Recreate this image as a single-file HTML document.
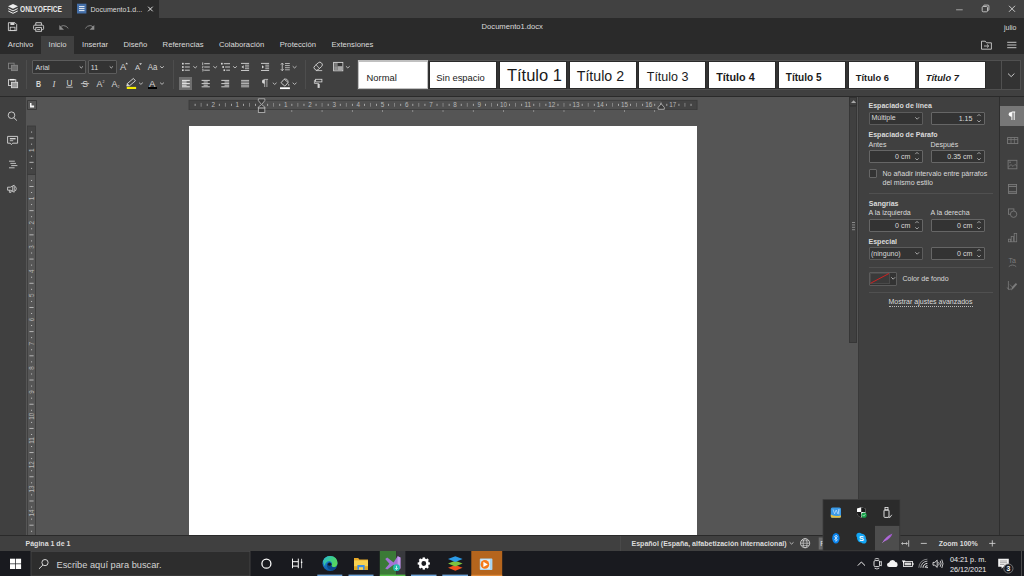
<!DOCTYPE html>
<html>
<head>
<meta charset="utf-8">
<title>ONLYOFFICE</title>
<style>
*{box-sizing:border-box;margin:0;padding:0}
html,body{width:1024px;height:576px;overflow:hidden;background:#555;font-family:"Liberation Sans",sans-serif;font-size:7.04px;color:#d9d9d9}
.a{position:absolute}
.t{position:absolute;white-space:nowrap;line-height:1}
svg{position:absolute;overflow:visible}
/* title bar */
#titlebar{left:0;top:0;width:1024px;height:18px;background:#414141}
#doctab{left:72px;top:0;width:87px;height:18px;background:#2a2a2a}
#header{left:0;top:18px;width:1024px;height:36px;background:#2a2a2a}
#tabactive{left:41px;top:36px;width:33px;height:18px;background:#404040}
.tab{font-size:7.68px;top:40.6px;color:#dcdcdc}
#toolbar{left:0;top:54px;width:1024px;height:43px;background:#404040;border-bottom:1px solid #2a2a2a}
.sep{position:absolute;top:60px;width:1px;height:29px;background:#4d4d4d}
.combo{position:absolute;background:#333;border:1px solid #5c5c5c;border-radius:1px}
/* gallery */
#gallery{left:357px;top:60px;width:664px;height:29.5px;background:#333;border:1px solid #505050}
.sty{position:absolute;top:61.3px;width:68px;height:27.6px;background:#fff;color:#1a1a1a;border:0.8px solid #2a2a2a}
.sty span{position:absolute;left:7px;white-space:nowrap;line-height:1}
/* doc area */
#leftbar{left:0;top:97px;width:26px;height:438px;background:#404040}
#sheet{left:189px;top:126px;width:508.3px;height:409px;background:#fff}
#rightpanel{left:858px;top:97px;width:141px;height:438px;background:#404040;border-left:1px solid #393939}
#rightbar{left:999px;top:97px;width:25px;height:438px;background:#404040;border-left:1px solid #2e2e2e}
#statusbar{left:0;top:535px;width:1024px;height:16px;background:#404040;border-top:1px solid #2a2a2a}
#taskbar{left:0;top:551px;width:1024px;height:25px;background:#191a1f}
.rp{font-size:7.04px;color:#dadada}
.rpb{font-size:7.04px;color:#dadada;font-weight:bold}
.spin{position:absolute;width:54px;height:13px;background:#333;border:1px solid #666;border-radius:1px}
.spin span{position:absolute;right:11.2px;top:2.4px;line-height:1;white-space:nowrap;color:#dadada}
.hr{position:absolute;left:868.5px;width:124px;height:1px;background:#505050}
</style>
</head>
<body>
<!-- TITLE BAR -->
<div class="a" id="titlebar"></div>
<div class="a" id="doctab"></div>
<div class="a" id="header"></div>
<div class="a" id="tabactive"></div>

<div class="t" style="left:20.4px;top:5.5px;font-size:8.2px;font-weight:bold;color:#e8e8e8;transform-origin:0 0;transform:scaleX(0.808)">ONLYOFFICE</div>
<div class="t" style="left:90.5px;top:5.6px;font-size:7.04px;color:#dcdcdc">Documento1.d...</div>
<div class="t" style="left:481.6px;top:23.3px;font-size:7.62px;color:#dcdcdc">Documento1.docx</div>
<div class="t" style="left:1004px;top:23.6px;font-size:7px;color:#dcdcdc">julio</div>

<div class="t tab" style="left:7.8px">Archivo</div>
<div class="t tab" style="left:48.5px">Inicio</div>
<div class="t tab" style="left:82px">Insertar</div>
<div class="t tab" style="left:123.5px">Diseño</div>
<div class="t tab" style="left:162.6px">Referencias</div>
<div class="t tab" style="left:219px">Colaboración</div>
<div class="t tab" style="left:279.7px">Protección</div>
<div class="t tab" style="left:331.5px">Extensiones</div>

<!-- TOOLBAR -->
<div class="a" id="toolbar"></div>
<div class="sep" style="left:25.6px"></div>
<div class="sep" style="left:172.6px"></div>
<div class="sep" style="left:305px"></div>
<div class="combo" style="left:32px;top:60px;width:54.4px;height:14.4px"></div>
<div class="combo" style="left:88px;top:60px;width:29px;height:14.4px"></div>
<div class="t" style="left:35.6px;top:63.6px;font-size:7.04px;color:#dcdcdc">Arial</div>
<div class="t" style="left:90.8px;top:63.6px;font-size:7.04px;color:#dcdcdc">11</div>

<!-- GALLERY -->
<div class="a" id="gallery"></div>
<div class="a" style="left:358px;top:60.3px;width:70px;height:28.9px;background:#c0c0c0"></div><div class="a" style="left:359.4px;top:61.7px;width:67.2px;height:26.1px;background:#fff"></div>
<div class="t" style="left:366.54px;top:73.44px;font-size:9.4px;font-weight:normal;font-style:normal;color:#1a1a1a">Normal</div>
<div class="sty" style="left:429.0px;width:68px;"></div>
<div class="t" style="left:436.32px;top:73.44px;font-size:9.4px;font-weight:normal;font-style:normal;color:#1a1a1a">Sin espacio</div>
<div class="sty" style="left:498.8px;width:68px;"></div>
<div class="t" style="left:506.93px;top:67.43px;font-size:16.5px;font-weight:normal;font-style:normal;color:#1a1a1a">Título 1</div>
<div class="sty" style="left:568.6px;width:68px;"></div>
<div class="t" style="left:576.72px;top:69.38px;font-size:14.2px;font-weight:normal;font-style:normal;color:#1a1a1a">Título 2</div>
<div class="sty" style="left:638.4px;width:68px;"></div>
<div class="t" style="left:646.75px;top:70.82px;font-size:12.5px;font-weight:normal;font-style:normal;color:#1a1a1a">Título 3</div>
<div class="sty" style="left:708.2px;width:68px;"></div>
<div class="t" style="left:716.28px;top:72.26px;font-size:10.8px;font-weight:bold;font-style:normal;color:#1a1a1a">Título 4</div>
<div class="sty" style="left:778.0px;width:68px;"></div>
<div class="t" style="left:785.80px;top:72.89px;font-size:10.05px;font-weight:bold;font-style:normal;color:#1a1a1a">Título 5</div>
<div class="sty" style="left:847.8px;width:68px;"></div>
<div class="t" style="left:855.81px;top:73.53px;font-size:9.3px;font-weight:bold;font-style:normal;color:#1a1a1a">Título 6</div>
<div class="sty" style="left:917.6px;width:68px;"></div>
<div class="t" style="left:925.81px;top:73.53px;font-size:9.3px;font-weight:bold;font-style:italic;color:#1a1a1a">Título 7</div>
<div class="a" style="left:1001.2px;top:60.5px;width:1px;height:28.6px;background:#505050"></div>

<!--ICONS_START-->
<svg style="left:0;top:0" width="1024" height="100" viewBox="0 0 1024 100">
<path d="M13 3.9 L18 6.3 L13 8.7 L8 6.3 Z" fill="#efefef"/>
<path d="M8.3 8.6 L13 10.9 L17.7 8.6 M8.3 11 L13 13.3 L17.7 11" fill="none" stroke="#efefef" stroke-width="1"/>
<rect x="77" y="3.7" width="9.4" height="9.8" fill="#446fa8"/>
<path d="M79 6.6 L84.5 6.6" stroke="#fff" stroke-width="0.9" fill="none"/>
<path d="M79 8.6 L84.5 8.6" stroke="#fff" stroke-width="0.9" fill="none"/>
<path d="M79 10.6 L84.5 10.6" stroke="#fff" stroke-width="0.9" fill="none"/>
<path d="M148.1 6.7 L152.7 11.3 M152.7 6.7 L148.1 11.3" stroke="#e0e0e0" stroke-width="1"/>
<path d="M956.1 9.8 L962.7 9.8" stroke="#b0b0b0" stroke-width="0.9" fill="none"/>
<rect x="982.2" y="6.5" width="5.3" height="5.3" rx="1" fill="none" stroke="#d0d0d0" stroke-width="0.85"/>
<path d="M983.6 6.5 V6 Q983.6 5.1 984.5 5.1 H988 Q988.9 5.1 988.9 6 V9.5 Q988.9 10.4 988 10.4 H987.5" fill="none" stroke="#d0d0d0" stroke-width="0.85"/>
<path d="M1009 5.8 L1015 11.8 M1015 5.8 L1009 11.8" stroke="#d8d8d8" stroke-width="0.9"/>
<path d="M8.4 22.7 H14.9 L16.7 24.5 V30.6 H8.4 Z" fill="none" stroke="#d6d6d6" stroke-width="0.9" stroke-linejoin="round"/>
<rect x="10.4" y="22.7" width="4" height="2.3" fill="#d6d6d6"/>
<rect x="10.2" y="27.2" width="4.8" height="3.4" fill="none" stroke="#d6d6d6" stroke-width="0.8"/>
<path d="M35.8 25 V22.7 H41.4 V25" fill="none" stroke="#d6d6d6" stroke-width="0.9"/>
<path d="M35.6 29.6 H34.6 Q33.6 29.6 33.6 28.6 V26.2 Q33.6 25.2 34.6 25.2 H42.6 Q43.6 25.2 43.6 26.2 V28.6 Q43.6 29.6 42.6 29.6 H41.6" fill="none" stroke="#d6d6d6" stroke-width="0.9"/>
<rect x="35.8" y="27.6" width="5.6" height="3.7" fill="none" stroke="#d6d6d6" stroke-width="0.9"/>
<path d="M37.2 29.5 L40 29.5" stroke="#d6d6d6" stroke-width="0.8" fill="none"/>
<path d="M68.3 28.4 Q66.3 25.5 63.4 25.6 Q61.4 25.7 60.2 27.4" fill="none" stroke="#8c8c8c" stroke-width="0.9"/>
<path d="M59.3 25 V29.8 H64 Z" fill="#8c8c8c"/>
<path d="M85.3 28.4 Q87.3 25.5 90.2 25.6 Q92.2 25.7 93.4 27.4" fill="none" stroke="#8c8c8c" stroke-width="0.9"/>
<path d="M94.3 25 V29.8 H89.6 Z" fill="#8c8c8c"/>
<path d="M981.5 49.2 V41.2 H985.3 L986.5 42.8 H991.4 V49.2 Z" fill="none" stroke="#d6d6d6" stroke-width="0.85" stroke-linejoin="round"/>
<path d="M984 46 H988.6 M987 44.4 L988.7 46 L987 47.6" fill="none" stroke="#d6d6d6" stroke-width="0.8"/>
<path d="M1007.2 42.3 L1016.4 42.3" stroke="#d6d6d6" stroke-width="0.9" fill="none"/>
<path d="M1007.2 45 L1016.4 45" stroke="#d6d6d6" stroke-width="0.9" fill="none"/>
<path d="M1007.2 47.7 L1016.4 47.7" stroke="#d6d6d6" stroke-width="0.9" fill="none"/>
<rect x="8.5" y="63.2" width="5.6" height="5.5" fill="none" stroke="#808080" stroke-width="0.9"/>
<rect x="11.5" y="65.3" width="5.9" height="5.3" fill="#6e6e6e" stroke="#858585" stroke-width="0.9"/>
<rect x="8.5" y="79.7" width="7.3" height="5.8" fill="none" stroke="#d6d6d6" stroke-width="0.9"/>
<path d="M10 79.7 L14.6 79.7" stroke="#efefef" stroke-width="1.5" fill="none"/>
<rect x="11.5" y="82.3" width="6.1" height="5.4" fill="#9a9a9a" stroke="#d6d6d6" stroke-width="0.9"/>
<path d="M79.70 66.45 L81.30 67.95 L82.90 66.45" fill="none" stroke="#c4c4c4" stroke-width="0.9"/>
<path d="M109.70 66.45 L111.30 67.95 L112.90 66.45" fill="none" stroke="#c4c4c4" stroke-width="0.9"/>
<text x="36.1" y="86.6" font-size="8.7" fill="#d6d6d6" font-weight="bold" font-style="normal" font-family="Liberation Sans" text-anchor="start" textLength="5.1" lengthAdjust="spacingAndGlyphs">B</text>
<text x="54" y="86.6" font-size="8.8" fill="#d6d6d6" font-weight="normal" font-style="italic" font-family="Liberation Serif" text-anchor="middle" >I</text>
<text x="69.5" y="85.8" font-size="8.2" fill="#d6d6d6" font-weight="normal" font-style="normal" font-family="Liberation Sans" text-anchor="middle" >U</text>
<path d="M66.2 87.2 L72.8 87.2" stroke="#d6d6d6" stroke-width="0.8" fill="none"/>
<text x="85" y="86.6" font-size="8.6" fill="#d6d6d6" font-weight="normal" font-style="normal" font-family="Liberation Sans" text-anchor="middle" >S</text>
<path d="M80.8 83.6 L89.2 83.6" stroke="#d6d6d6" stroke-width="0.8" fill="none"/>
<text x="96.6" y="86.8" font-size="8.8" fill="#d6d6d6" font-weight="normal" font-style="normal" font-family="Liberation Sans" text-anchor="start" >A</text>
<text x="102.6" y="82.6" font-size="3.6" fill="#d6d6d6" font-weight="normal" font-style="normal" font-family="Liberation Sans" text-anchor="start" >2</text>
<text x="111.6" y="86.8" font-size="8.8" fill="#d6d6d6" font-weight="normal" font-style="normal" font-family="Liberation Sans" text-anchor="start" >A</text>
<text x="117.6" y="87.6" font-size="3.6" fill="#d6d6d6" font-weight="normal" font-style="normal" font-family="Liberation Sans" text-anchor="start" >2</text>
<text x="119.9" y="70" font-size="9.3" fill="#d6d6d6" font-weight="normal" font-style="normal" font-family="Liberation Sans" text-anchor="start" >A</text>
<path d="M125.3 64.3 L126.65 62.6 L128 64.3 Z" fill="#d6d6d6"/>
<text x="134.9" y="70" font-size="7.6" fill="#d6d6d6" font-weight="normal" font-style="normal" font-family="Liberation Sans" text-anchor="start" >A</text>
<path d="M139.1 63.3 H142 L140.55 65 Z" fill="#d6d6d6"/>
<text x="147.8" y="70" font-size="8.6" fill="#d6d6d6" font-weight="normal" font-style="normal" font-family="Liberation Sans" text-anchor="start" textLength="9.6" lengthAdjust="spacingAndGlyphs">Aa</text>
<path d="M160.10 66.25 L162.00 67.95 L163.90 66.25" fill="none" stroke="#c4c4c4" stroke-width="0.9"/>
<g transform="translate(131.6,82) rotate(-40)"><rect x="-4.3" y="-1.55" width="8" height="3.1" fill="none" stroke="#d6d6d6" stroke-width="0.85"/><path d="M-4.3 -1.55 L-6.4 0 L-4.3 1.55" fill="#d6d6d6" stroke="#d6d6d6" stroke-width="0.6"/></g>
<rect x="126.8" y="86.9" width="9.3" height="2.1" fill="#f7ee00"/>
<path d="M139.00 82.65 L140.90 84.35 L142.80 82.65" fill="none" stroke="#c4c4c4" stroke-width="0.9"/>
<text x="148.9" y="86.7" font-size="9.6" fill="#d6d6d6" font-weight="normal" font-style="normal" font-family="Liberation Sans" text-anchor="start" >A</text>
<rect x="148" y="87" width="9" height="2" fill="#000"/>
<path d="M160.10 82.65 L162.00 84.35 L163.90 82.65" fill="none" stroke="#c4c4c4" stroke-width="0.9"/>
<rect x="182" y="62.85" width="1.7" height="1.7" fill="#d6d6d6"/>
<path d="M184.8 63.7 L189.8 63.7" stroke="#d6d6d6" stroke-width="0.9" fill="none"/>
<rect x="182" y="66.15" width="1.7" height="1.7" fill="#d6d6d6"/>
<path d="M184.8 67 L189.8 67" stroke="#d6d6d6" stroke-width="0.9" fill="none"/>
<rect x="182" y="69.35000000000001" width="1.7" height="1.7" fill="#d6d6d6"/>
<path d="M184.8 70.2 L189.8 70.2" stroke="#d6d6d6" stroke-width="0.9" fill="none"/>
<path d="M193.30 66.25 L195.20 67.95 L197.10 66.25" fill="none" stroke="#c4c4c4" stroke-width="0.9"/>
<path d="M204.2 63.7 L209.8 63.7" stroke="#d6d6d6" stroke-width="0.9" fill="none"/>
<path d="M204.2 67 L209.8 67" stroke="#d6d6d6" stroke-width="0.9" fill="none"/>
<path d="M204.2 70.2 L209.8 70.2" stroke="#d6d6d6" stroke-width="0.9" fill="none"/>
<path d="M202.7 62.4 L202.7 65" stroke="#d6d6d6" stroke-width="0.8" fill="none"/>
<path d="M202.2 66.2 L203.3 66.2" stroke="#d6d6d6" stroke-width="0.7" fill="none"/>
<path d="M202.2 67.8 L203.3 67.8" stroke="#d6d6d6" stroke-width="0.7" fill="none"/>
<path d="M203.2 66.2 L202.3 67.8" stroke="#d6d6d6" stroke-width="0.6" fill="none"/>
<path d="M202.2 69.4 L203.3 69.4" stroke="#d6d6d6" stroke-width="0.7" fill="none"/>
<path d="M202.2 71 L203.3 71" stroke="#d6d6d6" stroke-width="0.7" fill="none"/>
<path d="M203.2 69.4 L203.2 71" stroke="#d6d6d6" stroke-width="0.6" fill="none"/>
<path d="M213.30 66.25 L215.20 67.95 L217.10 66.25" fill="none" stroke="#c4c4c4" stroke-width="0.9"/>
<rect x="221" y="62.85" width="1.7" height="1.7" fill="#d6d6d6"/>
<path d="M223.8 63.7 L230 63.7" stroke="#d6d6d6" stroke-width="0.9" fill="none"/>
<rect x="222.3" y="66.15" width="1.7" height="1.7" fill="#d6d6d6"/>
<path d="M225.1 67 L230 67" stroke="#d6d6d6" stroke-width="0.9" fill="none"/>
<rect x="223.5" y="69.35" width="1.6" height="1.7" fill="#d6d6d6"/>
<path d="M226.2 70.2 L230 70.2" stroke="#d6d6d6" stroke-width="0.9" fill="none"/>
<path d="M233.10 66.25 L235.00 67.95 L236.90 66.25" fill="none" stroke="#c4c4c4" stroke-width="0.9"/>
<path d="M241 63.4 L249.1 63.4" stroke="#d6d6d6" stroke-width="0.9" fill="none"/>
<path d="M241 70.5 L249.1 70.5" stroke="#d6d6d6" stroke-width="0.9" fill="none"/>
<path d="M245 65.2 L249.1 65.2" stroke="#bdbdbd" stroke-width="0.9" fill="none"/>
<path d="M245 66.95 L249.1 66.95" stroke="#bdbdbd" stroke-width="0.9" fill="none"/>
<path d="M245 68.7 L249.1 68.7" stroke="#bdbdbd" stroke-width="0.9" fill="none"/>
<path d="M243.6 65.3 V68.6 L241.5 66.95 Z" fill="#d6d6d6"/>
<path d="M261 63.4 L269.1 63.4" stroke="#d6d6d6" stroke-width="0.9" fill="none"/>
<path d="M261 70.5 L269.1 70.5" stroke="#d6d6d6" stroke-width="0.9" fill="none"/>
<path d="M265.3 65.2 L269.1 65.2" stroke="#bdbdbd" stroke-width="0.9" fill="none"/>
<path d="M265.3 66.95 L269.1 66.95" stroke="#bdbdbd" stroke-width="0.9" fill="none"/>
<path d="M265.3 68.7 L269.1 68.7" stroke="#bdbdbd" stroke-width="0.9" fill="none"/>
<path d="M262 65.3 V68.6 L264.1 66.95 Z" fill="#d6d6d6"/>
<path d="M282.25 63.6 L282.25 70.3" stroke="#d6d6d6" stroke-width="0.8" fill="none"/>
<path d="M280.9 64.6 L282.25 63 L283.6 64.6 M280.9 69.2 L282.25 70.8 L283.6 69.2" fill="none" stroke="#d6d6d6" stroke-width="0.8"/>
<path d="M285 63.5 L289.8 63.5" stroke="#d6d6d6" stroke-width="0.75" fill="none"/>
<path d="M285 65.6 L289.8 65.6" stroke="#d6d6d6" stroke-width="0.75" fill="none"/>
<path d="M285 67.7 L289.8 67.7" stroke="#d6d6d6" stroke-width="0.75" fill="none"/>
<path d="M285 69.8 L289.8 69.8" stroke="#d6d6d6" stroke-width="0.75" fill="none"/>
<path d="M292.70 66.25 L294.60 67.95 L296.50 66.25" fill="none" stroke="#c4c4c4" stroke-width="0.9"/>
<rect x="179" y="77" width="13" height="13" fill="#6f6f6f"/>
<path d="M182 80.4 L189.8 80.4" stroke="#f0f0f0" stroke-width="0.95" fill="none"/>
<path d="M182 82 L186.6 82" stroke="#f0f0f0" stroke-width="0.95" fill="none"/>
<path d="M182 83.6 L189.8 83.6" stroke="#f0f0f0" stroke-width="0.95" fill="none"/>
<path d="M182 85.2 L186.6 85.2" stroke="#f0f0f0" stroke-width="0.95" fill="none"/>
<path d="M182 86.8 L189.8 86.8" stroke="#f0f0f0" stroke-width="0.95" fill="none"/>
<path d="M201.6 80.4 L209.8 80.4" stroke="#d6d6d6" stroke-width="0.95" fill="none"/>
<path d="M203.6 82 L207.8 82" stroke="#d6d6d6" stroke-width="0.95" fill="none"/>
<path d="M201.6 83.6 L209.8 83.6" stroke="#d6d6d6" stroke-width="0.95" fill="none"/>
<path d="M203.6 85.2 L207.8 85.2" stroke="#d6d6d6" stroke-width="0.95" fill="none"/>
<path d="M201.6 86.8 L209.8 86.8" stroke="#d6d6d6" stroke-width="0.95" fill="none"/>
<path d="M221.3 80.4 L229.2 80.4" stroke="#d6d6d6" stroke-width="0.95" fill="none"/>
<path d="M224.5 82 L229.2 82" stroke="#d6d6d6" stroke-width="0.95" fill="none"/>
<path d="M221.3 83.6 L229.2 83.6" stroke="#d6d6d6" stroke-width="0.95" fill="none"/>
<path d="M224.5 85.2 L229.2 85.2" stroke="#d6d6d6" stroke-width="0.95" fill="none"/>
<path d="M221.3 86.8 L229.2 86.8" stroke="#d6d6d6" stroke-width="0.95" fill="none"/>
<path d="M241.1 80.4 L249.1 80.4" stroke="#c4c4c4" stroke-width="0.95" fill="none"/>
<path d="M241.1 82 L249.1 82" stroke="#c4c4c4" stroke-width="0.95" fill="none"/>
<path d="M241.1 83.6 L249.1 83.6" stroke="#c4c4c4" stroke-width="0.95" fill="none"/>
<path d="M241.1 85.2 L249.1 85.2" stroke="#c4c4c4" stroke-width="0.95" fill="none"/>
<path d="M241.1 86.8 L249.1 86.8" stroke="#c4c4c4" stroke-width="0.95" fill="none"/>
<path d="M264.6 79.4 H268.1 M264.7 79.3 V87 M266.9 79.3 V87" stroke="#d6d6d6" stroke-width="0.7" fill="none"/>
<path d="M265 79.3 Q262 79.3 262 81.5 Q262 83.7 264.7 83.7 V79.3 Z" fill="#d6d6d6"/>
<path d="M272.80 82.75 L274.70 84.45 L276.60 82.75" fill="none" stroke="#c4c4c4" stroke-width="0.9"/>
<g transform="translate(284.6,82.6) rotate(40)"><rect x="-2.6" y="-2.4" width="5.2" height="4.9" rx="0.5" fill="none" stroke="#d6d6d6" stroke-width="0.85"/><path d="M-2.6 -2.4 Q0 -5.5 2.6 -2.4" fill="none" stroke="#d6d6d6" stroke-width="0.7"/></g>
<path d="M288.8 83.6 Q289.9 85.2 288.8 85.9 Q287.7 85.2 288.8 83.6 Z" fill="#d6d6d6"/>
<rect x="280" y="87.3" width="9.9" height="1.8" fill="#fff"/>
<path d="M292.70 82.75 L294.60 84.45 L296.50 82.75" fill="none" stroke="#c4c4c4" stroke-width="0.9"/>
<g transform="translate(318.2,66.2) rotate(-42)"><rect x="-4.6" y="-2.5" width="9.2" height="5" rx="2.3" fill="none" stroke="#d6d6d6" stroke-width="0.85"/><path d="M-0.6 -2.5 V2.5" stroke="#d6d6d6" stroke-width="0.7"/></g>
<path d="M316 70.6 L322.2 70.6" stroke="#d6d6d6" stroke-width="0.8" fill="none"/>
<rect x="333.6" y="62.4" width="9.2" height="8.4" fill="none" stroke="#d6d6d6" stroke-width="0.9"/>
<rect x="334.2" y="63" width="3.6" height="3.2" fill="#7a7a7a"/>
<rect x="337.8" y="63" width="4.4" height="3.2" fill="#333"/>
<rect x="334.2" y="66.2" width="3.6" height="4" fill="#8e8e8e"/>
<rect x="337.8" y="66.2" width="4.4" height="4" fill="#a6a6a6"/>
<path d="M345.90 66.25 L347.80 67.95 L349.70 66.25" fill="none" stroke="#c4c4c4" stroke-width="0.9"/>
<rect x="315.6" y="79.3" width="6.3" height="2.6" fill="none" stroke="#d6d6d6" stroke-width="0.85"/>
<path d="M315.6 80.4 H314.4 V83.4 H318.6 V84" fill="none" stroke="#d6d6d6" stroke-width="0.8"/>
<rect x="317.6" y="84" width="2.1" height="3.9" fill="#d6d6d6"/>
<path d="M1008.00 73.55 L1011.20 76.65 L1014.40 73.55" fill="none" stroke="#d0d0d0" stroke-width="0.95"/>
</svg>
<!--ICONS_END-->
<!-- DOC AREA -->
<div class="a" id="leftbar"></div>
<div class="a" id="sheet"></div>
<!-- RULERS -->
<div class="a" style="left:27.2px;top:100.3px;width:9.5px;height:9.6px;background:#565656;border:0.9px solid #3a3a3a;border-radius:0.8px"></div>
<svg style="left:30px;top:103.2px" width="5" height="5" viewBox="0 0 5 5"><path d="M0 0 H1.5 V2.5 H4.1 V4.5 H0 Z" fill="#f4f4f4"/></svg>
<!--RULER_START-->
<svg style="left:0;top:0" width="1024" height="130" viewBox="0 0 1024 130">
<rect x="189.0" y="100.3" width="508.1" height="9.3" fill="#444" stroke="#3a3a3a" stroke-width="0.8"/>
<rect x="261.58" y="100.7" width="399.64" height="8.5" fill="#505050"/>
<rect x="194.70" y="103.8" width="0.8" height="2.1" fill="#bdbdbd"/>
<rect x="200.75" y="102.9" width="0.7" height="3.8" fill="#9a9a9a"/>
<rect x="206.79" y="103.8" width="0.8" height="2.1" fill="#bdbdbd"/>
<rect x="218.89" y="103.8" width="0.8" height="2.1" fill="#bdbdbd"/>
<rect x="224.94" y="102.9" width="0.7" height="3.8" fill="#9a9a9a"/>
<rect x="230.99" y="103.8" width="0.8" height="2.1" fill="#bdbdbd"/>
<rect x="243.08" y="103.8" width="0.8" height="2.1" fill="#bdbdbd"/>
<rect x="249.13" y="102.9" width="0.7" height="3.8" fill="#9a9a9a"/>
<rect x="255.18" y="103.8" width="0.8" height="2.1" fill="#bdbdbd"/>
<rect x="267.27" y="103.8" width="0.8" height="2.1" fill="#bdbdbd"/>
<rect x="273.32" y="102.9" width="0.7" height="3.8" fill="#9a9a9a"/>
<rect x="279.37" y="103.8" width="0.8" height="2.1" fill="#bdbdbd"/>
<rect x="291.47" y="103.8" width="0.8" height="2.1" fill="#bdbdbd"/>
<rect x="297.51" y="102.9" width="0.7" height="3.8" fill="#9a9a9a"/>
<rect x="303.56" y="103.8" width="0.8" height="2.1" fill="#bdbdbd"/>
<rect x="315.66" y="103.8" width="0.8" height="2.1" fill="#bdbdbd"/>
<rect x="321.71" y="102.9" width="0.7" height="3.8" fill="#9a9a9a"/>
<rect x="327.75" y="103.8" width="0.8" height="2.1" fill="#bdbdbd"/>
<rect x="339.85" y="103.8" width="0.8" height="2.1" fill="#bdbdbd"/>
<rect x="345.90" y="102.9" width="0.7" height="3.8" fill="#9a9a9a"/>
<rect x="351.95" y="103.8" width="0.8" height="2.1" fill="#bdbdbd"/>
<rect x="364.04" y="103.8" width="0.8" height="2.1" fill="#bdbdbd"/>
<rect x="370.09" y="102.9" width="0.7" height="3.8" fill="#9a9a9a"/>
<rect x="376.14" y="103.8" width="0.8" height="2.1" fill="#bdbdbd"/>
<rect x="388.23" y="103.8" width="0.8" height="2.1" fill="#bdbdbd"/>
<rect x="394.28" y="102.9" width="0.7" height="3.8" fill="#9a9a9a"/>
<rect x="400.33" y="103.8" width="0.8" height="2.1" fill="#bdbdbd"/>
<rect x="412.43" y="103.8" width="0.8" height="2.1" fill="#bdbdbd"/>
<rect x="418.47" y="102.9" width="0.7" height="3.8" fill="#9a9a9a"/>
<rect x="424.52" y="103.8" width="0.8" height="2.1" fill="#bdbdbd"/>
<rect x="436.62" y="103.8" width="0.8" height="2.1" fill="#bdbdbd"/>
<rect x="442.67" y="102.9" width="0.7" height="3.8" fill="#9a9a9a"/>
<rect x="448.71" y="103.8" width="0.8" height="2.1" fill="#bdbdbd"/>
<rect x="460.81" y="103.8" width="0.8" height="2.1" fill="#bdbdbd"/>
<rect x="466.86" y="102.9" width="0.7" height="3.8" fill="#9a9a9a"/>
<rect x="472.91" y="103.8" width="0.8" height="2.1" fill="#bdbdbd"/>
<rect x="485.00" y="103.8" width="0.8" height="2.1" fill="#bdbdbd"/>
<rect x="491.05" y="102.9" width="0.7" height="3.8" fill="#9a9a9a"/>
<rect x="497.10" y="103.8" width="0.8" height="2.1" fill="#bdbdbd"/>
<rect x="509.19" y="103.8" width="0.8" height="2.1" fill="#bdbdbd"/>
<rect x="515.24" y="102.9" width="0.7" height="3.8" fill="#9a9a9a"/>
<rect x="521.29" y="103.8" width="0.8" height="2.1" fill="#bdbdbd"/>
<rect x="533.39" y="103.8" width="0.8" height="2.1" fill="#bdbdbd"/>
<rect x="539.43" y="102.9" width="0.7" height="3.8" fill="#9a9a9a"/>
<rect x="545.48" y="103.8" width="0.8" height="2.1" fill="#bdbdbd"/>
<rect x="557.58" y="103.8" width="0.8" height="2.1" fill="#bdbdbd"/>
<rect x="563.63" y="102.9" width="0.7" height="3.8" fill="#9a9a9a"/>
<rect x="569.67" y="103.8" width="0.8" height="2.1" fill="#bdbdbd"/>
<rect x="581.77" y="103.8" width="0.8" height="2.1" fill="#bdbdbd"/>
<rect x="587.82" y="102.9" width="0.7" height="3.8" fill="#9a9a9a"/>
<rect x="593.87" y="103.8" width="0.8" height="2.1" fill="#bdbdbd"/>
<rect x="605.96" y="103.8" width="0.8" height="2.1" fill="#bdbdbd"/>
<rect x="612.01" y="102.9" width="0.7" height="3.8" fill="#9a9a9a"/>
<rect x="618.06" y="103.8" width="0.8" height="2.1" fill="#bdbdbd"/>
<rect x="630.15" y="103.8" width="0.8" height="2.1" fill="#bdbdbd"/>
<rect x="636.20" y="102.9" width="0.7" height="3.8" fill="#9a9a9a"/>
<rect x="642.25" y="103.8" width="0.8" height="2.1" fill="#bdbdbd"/>
<rect x="654.35" y="103.8" width="0.8" height="2.1" fill="#bdbdbd"/>
<rect x="660.39" y="102.9" width="0.7" height="3.8" fill="#9a9a9a"/>
<rect x="666.44" y="103.8" width="0.8" height="2.1" fill="#bdbdbd"/>
<rect x="678.54" y="103.8" width="0.8" height="2.1" fill="#bdbdbd"/>
<rect x="684.59" y="102.9" width="0.7" height="3.8" fill="#9a9a9a"/>
<rect x="690.63" y="103.8" width="0.8" height="2.1" fill="#bdbdbd"/>
<text x="213.19" y="107.0" font-size="6.3" fill="#b8b8b8" text-anchor="middle" font-family="Liberation Sans">2</text>
<text x="237.38" y="107.0" font-size="6.3" fill="#b8b8b8" text-anchor="middle" font-family="Liberation Sans">1</text>
<text x="285.77" y="107.0" font-size="6.3" fill="#b8b8b8" text-anchor="middle" font-family="Liberation Sans">1</text>
<text x="309.96" y="107.0" font-size="6.3" fill="#b8b8b8" text-anchor="middle" font-family="Liberation Sans">2</text>
<text x="334.15" y="107.0" font-size="6.3" fill="#b8b8b8" text-anchor="middle" font-family="Liberation Sans">3</text>
<text x="358.34" y="107.0" font-size="6.3" fill="#b8b8b8" text-anchor="middle" font-family="Liberation Sans">4</text>
<text x="382.54" y="107.0" font-size="6.3" fill="#b8b8b8" text-anchor="middle" font-family="Liberation Sans">5</text>
<text x="406.73" y="107.0" font-size="6.3" fill="#b8b8b8" text-anchor="middle" font-family="Liberation Sans">6</text>
<text x="430.92" y="107.0" font-size="6.3" fill="#b8b8b8" text-anchor="middle" font-family="Liberation Sans">7</text>
<text x="455.11" y="107.0" font-size="6.3" fill="#b8b8b8" text-anchor="middle" font-family="Liberation Sans">8</text>
<text x="479.30" y="107.0" font-size="6.3" fill="#b8b8b8" text-anchor="middle" font-family="Liberation Sans">9</text>
<text x="503.50" y="107.0" font-size="6.3" fill="#b8b8b8" text-anchor="middle" font-family="Liberation Sans">10</text>
<text x="527.69" y="107.0" font-size="6.3" fill="#b8b8b8" text-anchor="middle" font-family="Liberation Sans">11</text>
<text x="551.88" y="107.0" font-size="6.3" fill="#b8b8b8" text-anchor="middle" font-family="Liberation Sans">12</text>
<text x="576.07" y="107.0" font-size="6.3" fill="#b8b8b8" text-anchor="middle" font-family="Liberation Sans">13</text>
<text x="600.26" y="107.0" font-size="6.3" fill="#b8b8b8" text-anchor="middle" font-family="Liberation Sans">14</text>
<text x="624.46" y="107.0" font-size="6.3" fill="#b8b8b8" text-anchor="middle" font-family="Liberation Sans">15</text>
<text x="648.65" y="107.0" font-size="6.3" fill="#b8b8b8" text-anchor="middle" font-family="Liberation Sans">16</text>
<text x="672.84" y="107.0" font-size="6.3" fill="#b8b8b8" text-anchor="middle" font-family="Liberation Sans">17</text>
<rect x="291.47" y="110.2" width="0.7" height="1.6" fill="#b6b6b6"/>
<rect x="321.71" y="110.2" width="0.7" height="1.6" fill="#b6b6b6"/>
<rect x="351.95" y="110.2" width="0.7" height="1.6" fill="#b6b6b6"/>
<rect x="382.19" y="110.2" width="0.7" height="1.6" fill="#b6b6b6"/>
<rect x="412.43" y="110.2" width="0.7" height="1.6" fill="#b6b6b6"/>
<rect x="442.67" y="110.2" width="0.7" height="1.6" fill="#b6b6b6"/>
<rect x="472.91" y="110.2" width="0.7" height="1.6" fill="#b6b6b6"/>
<rect x="503.15" y="110.2" width="0.7" height="1.6" fill="#b6b6b6"/>
<rect x="533.39" y="110.2" width="0.7" height="1.6" fill="#b6b6b6"/>
<rect x="563.63" y="110.2" width="0.7" height="1.6" fill="#b6b6b6"/>
<rect x="593.87" y="110.2" width="0.7" height="1.6" fill="#b6b6b6"/>
<rect x="624.11" y="110.2" width="0.7" height="1.6" fill="#b6b6b6"/>
<rect x="654.35" y="110.2" width="0.7" height="1.6" fill="#b6b6b6"/>
<path d="M258.33 98.8 H264.83 V100.6 L261.58 104.6 L258.33 100.6 Z" fill="#3a3a3a" stroke="#b8b8b8" stroke-width="0.85"/>
<path d="M261.58 104.6 L264.83 107 V108.1 H258.33 V107 Z" fill="#3a3a3a" stroke="#b8b8b8" stroke-width="0.85"/>
<rect x="258.33" y="108.1" width="6.5" height="4.4" fill="#3a3a3a" stroke="#b8b8b8" stroke-width="0.85"/>
<path d="M661.21 102.6 V103.8 L664.31 107.3 V109.3 H658.11 V107.3 L661.21 103.8" fill="#3a3a3a" stroke="#b8b8b8" stroke-width="0.85"/>
</svg>
<svg style="left:0;top:0" width="40" height="535" viewBox="0 0 40 535">
<rect x="27.4" y="126.0" width="8.1" height="420" fill="#444" stroke="#3a3a3a" stroke-width="0.8"/>
<rect x="27.8" y="174.38" width="7.3" height="400" fill="#565656"/>
<rect x="27.4" y="173.98" width="8.1" height="0.8" fill="#363636"/>
<rect x="31" y="131.60" width="1.1" height="0.9" fill="#c8c8c8"/>
<rect x="29.4" y="137.65" width="4.2" height="0.9" fill="#c0c0c0"/>
<rect x="31" y="143.69" width="1.1" height="0.9" fill="#c8c8c8"/>
<text transform="translate(33.7,150.19) rotate(-90)" font-size="6.3" fill="#b8b8b8" text-anchor="middle" font-family="Liberation Sans">1</text>
<rect x="31" y="155.79" width="1.1" height="0.9" fill="#c8c8c8"/>
<rect x="29.4" y="161.84" width="4.2" height="0.9" fill="#c0c0c0"/>
<rect x="31" y="167.89" width="1.1" height="0.9" fill="#c8c8c8"/>
<rect x="31" y="179.98" width="1.1" height="0.9" fill="#c8c8c8"/>
<rect x="29.4" y="186.03" width="4.2" height="0.9" fill="#c0c0c0"/>
<rect x="31" y="192.08" width="1.1" height="0.9" fill="#c8c8c8"/>
<text transform="translate(33.7,198.58) rotate(-90)" font-size="6.3" fill="#b8b8b8" text-anchor="middle" font-family="Liberation Sans">1</text>
<rect x="31" y="204.17" width="1.1" height="0.9" fill="#c8c8c8"/>
<rect x="29.4" y="210.22" width="4.2" height="0.9" fill="#c0c0c0"/>
<rect x="31" y="216.27" width="1.1" height="0.9" fill="#c8c8c8"/>
<text transform="translate(33.7,222.77) rotate(-90)" font-size="6.3" fill="#b8b8b8" text-anchor="middle" font-family="Liberation Sans">2</text>
<rect x="31" y="228.37" width="1.1" height="0.9" fill="#c8c8c8"/>
<rect x="29.4" y="234.41" width="4.2" height="0.9" fill="#c0c0c0"/>
<rect x="31" y="240.46" width="1.1" height="0.9" fill="#c8c8c8"/>
<text transform="translate(33.7,246.96) rotate(-90)" font-size="6.3" fill="#b8b8b8" text-anchor="middle" font-family="Liberation Sans">3</text>
<rect x="31" y="252.56" width="1.1" height="0.9" fill="#c8c8c8"/>
<rect x="29.4" y="258.61" width="4.2" height="0.9" fill="#c0c0c0"/>
<rect x="31" y="264.65" width="1.1" height="0.9" fill="#c8c8c8"/>
<text transform="translate(33.7,271.15) rotate(-90)" font-size="6.3" fill="#b8b8b8" text-anchor="middle" font-family="Liberation Sans">4</text>
<rect x="31" y="276.75" width="1.1" height="0.9" fill="#c8c8c8"/>
<rect x="29.4" y="282.80" width="4.2" height="0.9" fill="#c0c0c0"/>
<rect x="31" y="288.85" width="1.1" height="0.9" fill="#c8c8c8"/>
<text transform="translate(33.7,295.34) rotate(-90)" font-size="6.3" fill="#b8b8b8" text-anchor="middle" font-family="Liberation Sans">5</text>
<rect x="31" y="300.94" width="1.1" height="0.9" fill="#c8c8c8"/>
<rect x="29.4" y="306.99" width="4.2" height="0.9" fill="#c0c0c0"/>
<rect x="31" y="313.04" width="1.1" height="0.9" fill="#c8c8c8"/>
<text transform="translate(33.7,319.54) rotate(-90)" font-size="6.3" fill="#b8b8b8" text-anchor="middle" font-family="Liberation Sans">6</text>
<rect x="31" y="325.13" width="1.1" height="0.9" fill="#c8c8c8"/>
<rect x="29.4" y="331.18" width="4.2" height="0.9" fill="#c0c0c0"/>
<rect x="31" y="337.23" width="1.1" height="0.9" fill="#c8c8c8"/>
<text transform="translate(33.7,343.73) rotate(-90)" font-size="6.3" fill="#b8b8b8" text-anchor="middle" font-family="Liberation Sans">7</text>
<rect x="31" y="349.33" width="1.1" height="0.9" fill="#c8c8c8"/>
<rect x="29.4" y="355.37" width="4.2" height="0.9" fill="#c0c0c0"/>
<rect x="31" y="361.42" width="1.1" height="0.9" fill="#c8c8c8"/>
<text transform="translate(33.7,367.92) rotate(-90)" font-size="6.3" fill="#b8b8b8" text-anchor="middle" font-family="Liberation Sans">8</text>
<rect x="31" y="373.52" width="1.1" height="0.9" fill="#c8c8c8"/>
<rect x="29.4" y="379.57" width="4.2" height="0.9" fill="#c0c0c0"/>
<rect x="31" y="385.61" width="1.1" height="0.9" fill="#c8c8c8"/>
<text transform="translate(33.7,392.11) rotate(-90)" font-size="6.3" fill="#b8b8b8" text-anchor="middle" font-family="Liberation Sans">9</text>
<rect x="31" y="397.71" width="1.1" height="0.9" fill="#c8c8c8"/>
<rect x="29.4" y="403.76" width="4.2" height="0.9" fill="#c0c0c0"/>
<rect x="31" y="409.81" width="1.1" height="0.9" fill="#c8c8c8"/>
<text transform="translate(33.7,416.30) rotate(-90)" font-size="6.3" fill="#b8b8b8" text-anchor="middle" font-family="Liberation Sans">10</text>
<rect x="31" y="421.90" width="1.1" height="0.9" fill="#c8c8c8"/>
<rect x="29.4" y="427.95" width="4.2" height="0.9" fill="#c0c0c0"/>
<rect x="31" y="434.00" width="1.1" height="0.9" fill="#c8c8c8"/>
<text transform="translate(33.7,440.50) rotate(-90)" font-size="6.3" fill="#b8b8b8" text-anchor="middle" font-family="Liberation Sans">11</text>
<rect x="31" y="446.09" width="1.1" height="0.9" fill="#c8c8c8"/>
<rect x="29.4" y="452.14" width="4.2" height="0.9" fill="#c0c0c0"/>
<rect x="31" y="458.19" width="1.1" height="0.9" fill="#c8c8c8"/>
<text transform="translate(33.7,464.69) rotate(-90)" font-size="6.3" fill="#b8b8b8" text-anchor="middle" font-family="Liberation Sans">12</text>
<rect x="31" y="470.29" width="1.1" height="0.9" fill="#c8c8c8"/>
<rect x="29.4" y="476.33" width="4.2" height="0.9" fill="#c0c0c0"/>
<rect x="31" y="482.38" width="1.1" height="0.9" fill="#c8c8c8"/>
<text transform="translate(33.7,488.88) rotate(-90)" font-size="6.3" fill="#b8b8b8" text-anchor="middle" font-family="Liberation Sans">13</text>
<rect x="31" y="494.48" width="1.1" height="0.9" fill="#c8c8c8"/>
<rect x="29.4" y="500.53" width="4.2" height="0.9" fill="#c0c0c0"/>
<rect x="31" y="506.57" width="1.1" height="0.9" fill="#c8c8c8"/>
<text transform="translate(33.7,513.07) rotate(-90)" font-size="6.3" fill="#b8b8b8" text-anchor="middle" font-family="Liberation Sans">14</text>
<rect x="31" y="518.67" width="1.1" height="0.9" fill="#c8c8c8"/>
<rect x="29.4" y="524.72" width="4.2" height="0.9" fill="#c0c0c0"/>
<rect x="31" y="530.77" width="1.1" height="0.9" fill="#c8c8c8"/>
</svg>
<!--RULER_END-->
<div class="a" id="rightpanel"></div>
<div class="a" id="rightbar"></div>

<!-- RIGHT PANEL CONTENT -->
<div class="a" style="left:849.4px;top:97px;width:9px;height:438px;background:#555"></div>
<div class="a" style="left:849.4px;top:97px;width:7.6px;height:9px;background:#404040;border:0.7px solid #333"></div>
<svg style="left:850.9px;top:100px" width="5.2" height="2.9" viewBox="0 0 5.2 2.9"><path d="M0 2.9 L2.6 0.2 L5.2 2.9 Z" fill="#a8a8a8"/></svg>
<div class="a" style="left:849.4px;top:106px;width:7.6px;height:237px;background:#404040;border:0.7px solid #363636"></div>
<div class="a" style="left:851.6px;top:221.5px;width:3.4px;height:0.9px;background:#8a8a8a;box-shadow:0 2.4px 0 #8a8a8a,0 4.8px 0 #8a8a8a,0 7.2px 0 #8a8a8a"></div>
<div class="t rpb" style="left:868.5px;top:102.2px">Espaciado de línea</div>
<div class="combo" style="left:868.5px;top:111.5px;width:54px;height:13px"></div>
<div class="t rp" style="left:871.5px;top:114.3px">Múltiple</div>
<svg style="left:915.3px;top:116.8px" width="4.4" height="2.6" viewBox="0 0 4.4 2.6"><path d="M0.3 0.3 L2.2 2.2 L4.1 0.3" fill="none" stroke="#c8c8c8" stroke-width="0.8"/></svg>
<div class="spin" style="left:930.5px;top:111.5px"><span>1.15</span></div>
<svg style="left:977.0px;top:113.9px" width="4" height="8.4" viewBox="0 0 4 8.4"><path d="M0.3 2.1 L2 0.4 L3.7 2.1 M0.3 6.3 L2 8 L3.7 6.3" fill="none" stroke="#c8c8c8" stroke-width="0.75"/></svg>
<div class="t rpb" style="left:868.5px;top:131px">Espaciado de Párafo</div>
<div class="t rp" style="left:868.5px;top:140.5px">Antes</div>
<div class="t rp" style="left:930.5px;top:140.5px">Después</div>
<div class="spin" style="left:868.5px;top:150px"><span>0 cm</span></div>
<svg style="left:915.0px;top:152.4px" width="4" height="8.4" viewBox="0 0 4 8.4"><path d="M0.3 2.1 L2 0.4 L3.7 2.1 M0.3 6.3 L2 8 L3.7 6.3" fill="none" stroke="#c8c8c8" stroke-width="0.75"/></svg>
<div class="spin" style="left:930.5px;top:150px"><span>0.35 cm</span></div>
<svg style="left:977.0px;top:152.4px" width="4" height="8.4" viewBox="0 0 4 8.4"><path d="M0.3 2.1 L2 0.4 L3.7 2.1 M0.3 6.3 L2 8 L3.7 6.3" fill="none" stroke="#c8c8c8" stroke-width="0.75"/></svg>
<div class="a" style="left:868.5px;top:169px;width:8.8px;height:8.8px;background:#333;border:0.8px solid #666;border-radius:1px"></div>
<div class="t rp" style="left:882.5px;top:169.5px">No añadir intervalo entre párrafos</div>
<div class="t rp" style="left:882.5px;top:179.3px">del mismo estilo</div>
<div class="hr" style="top:193px"></div>
<div class="t rpb" style="left:868.8px;top:199.8px">Sangrías</div>
<div class="t rp" style="left:868.5px;top:209.3px">A la izquierda</div>
<div class="t rp" style="left:930.5px;top:209.3px">A la derecha</div>
<div class="spin" style="left:868.5px;top:218.5px"><span>0 cm</span></div>
<svg style="left:915.0px;top:220.9px" width="4" height="8.4" viewBox="0 0 4 8.4"><path d="M0.3 2.1 L2 0.4 L3.7 2.1 M0.3 6.3 L2 8 L3.7 6.3" fill="none" stroke="#c8c8c8" stroke-width="0.75"/></svg>
<div class="spin" style="left:930.5px;top:218.5px"><span>0 cm</span></div>
<svg style="left:977.0px;top:220.9px" width="4" height="8.4" viewBox="0 0 4 8.4"><path d="M0.3 2.1 L2 0.4 L3.7 2.1 M0.3 6.3 L2 8 L3.7 6.3" fill="none" stroke="#c8c8c8" stroke-width="0.75"/></svg>
<div class="t rpb" style="left:868.5px;top:238px">Especial</div>
<div class="combo" style="left:868.5px;top:247px;width:54px;height:13px"></div>
<div class="t rp" style="left:871px;top:249.8px">(ninguno)</div>
<svg style="left:915.3px;top:252.4px" width="4.4" height="2.6" viewBox="0 0 4.4 2.6"><path d="M0.3 0.3 L2.2 2.2 L4.1 0.3" fill="none" stroke="#c8c8c8" stroke-width="0.8"/></svg>
<div class="spin" style="left:930.5px;top:247px"><span>0 cm</span></div>
<svg style="left:977.0px;top:249.4px" width="4" height="8.4" viewBox="0 0 4 8.4"><path d="M0.3 2.1 L2 0.4 L3.7 2.1 M0.3 6.3 L2 8 L3.7 6.3" fill="none" stroke="#c8c8c8" stroke-width="0.75"/></svg>
<div class="hr" style="top:266.5px"></div>
<div class="combo" style="left:868.5px;top:271.7px;width:28.5px;height:14px"></div>
<div class="a" style="left:870px;top:273.3px;width:19.5px;height:10.8px;background:#3a3a3a;border:0.5px solid #4a4a4a"></div>
<svg style="left:870px;top:273.3px" width="19.5" height="10.8" viewBox="0 0 19.5 10.8"><path d="M0.5 10.3 L19 0.5" stroke="#e01e1e" stroke-width="0.9"/></svg>
<svg style="left:890.5px;top:277.40000000000003px" width="4.4" height="2.6" viewBox="0 0 4.4 2.6"><path d="M0.3 0.3 L2.2 2.2 L4.1 0.3" fill="none" stroke="#c8c8c8" stroke-width="0.8"/></svg>
<div class="t rp" style="left:902.5px;top:274.8px">Color de fondo</div>
<div class="hr" style="top:291.5px"></div>
<div class="t rp" style="left:888.5px;top:297.7px;border-bottom:0.8px dotted #bbb;padding-bottom:1.2px">Mostrar ajustes avanzados</div>
<div class="a" style="left:1000px;top:106px;width:24px;height:19.5px;background:#777"></div>
<!-- STATUS BAR -->
<div class="a" id="statusbar"></div>
<div class="t" style="left:25.5px;top:539.8px;font-size:7.04px;font-weight:bold;color:#dcdcdc">Página 1 de 1</div>
<div class="t" style="left:631.5px;top:539.8px;font-size:7.04px;font-weight:bold;color:#dcdcdc">Español (España, alfabetización internacional)</div>
<div class="t" style="left:938.7px;top:539.8px;font-size:7.04px;font-weight:bold;color:#dcdcdc">Zoom 100%</div>

<!-- TASKBAR -->
<div class="a" id="taskbar"></div>

<!--ICONS2_START-->
<svg style="left:0;top:0" width="1024" height="576" viewBox="0 0 1024 576">
<circle cx="11.5" cy="115.2" r="3.3" fill="none" stroke="#d6d6d6" stroke-width="0.9"/>
<path d="M13.9 117.7 L16.9 120.6" stroke="#d6d6d6" stroke-width="0.95" fill="none"/>
<path d="M7.6 136.4 H17.6 V143.2 H12.6 L11.4 144.6 L10.2 143.2 H7.6 Z" fill="none" stroke="#d6d6d6" stroke-width="0.9" stroke-linejoin="round"/>
<path d="M9.8 138.7 L15.6 138.7" stroke="#d6d6d6" stroke-width="1.3" fill="none"/>
<path d="M9.8 140.7 L13.2 140.7" stroke="#d6d6d6" stroke-width="0.8" fill="none"/>
<path d="M9 161.2 L14.8 161.2" stroke="#d6d6d6" stroke-width="0.85" fill="none"/>
<path d="M10.4 163.4 L16 163.4" stroke="#d6d6d6" stroke-width="0.85" fill="none"/>
<path d="M11.2 165.6 L17.4 165.6" stroke="#d6d6d6" stroke-width="0.85" fill="none"/>
<path d="M9 167.8 L14.6 167.8" stroke="#d6d6d6" stroke-width="0.85" fill="none"/>
<path d="M7.6 187.2 H10.4 L14.2 185.2 V192.2 L10.4 190.2 H7.6 Z" fill="none" stroke="#d6d6d6" stroke-width="0.85" stroke-linejoin="round"/>
<path d="M9.4 190.2 V192.4 H11 V190.4" fill="none" stroke="#d6d6d6" stroke-width="0.8"/>
<path d="M15.4 186.4 Q17.2 188.7 15.4 191" fill="none" stroke="#d6d6d6" stroke-width="0.85"/>
<path d="M12.6 186.2 L12.6 191.2" stroke="#d6d6d6" stroke-width="0.7" fill="none"/>
<path d="M1011.8 112 H1015.2 M1011.9 111.9 V120 M1014.2 111.9 V120" stroke="#fff" stroke-width="0.95" fill="none"/>
<path d="M1011.9 111.9 Q1008.7 111.9 1008.7 114.3 Q1008.7 116.7 1011.9 116.7 Z" fill="#fff"/>
<rect x="1007.6" y="137.6" width="10.2" height="6" fill="none" stroke="#7c7c7c" stroke-width="0.85"/>
<path d="M1007.6 139.6 L1017.8 139.6" stroke="#7c7c7c" stroke-width="0.8" fill="none"/>
<path d="M1011 137.6 L1011 143.6" stroke="#7c7c7c" stroke-width="0.7" fill="none"/>
<path d="M1014.4 137.6 L1014.4 143.6" stroke="#7c7c7c" stroke-width="0.7" fill="none"/>
<rect x="1008.1" y="160.3" width="8.8" height="8.5" fill="none" stroke="#7c7c7c" stroke-width="0.85"/>
<path d="M1008.4 167 L1011 164.6 L1013 166.4 L1015 164.4 L1016.8 166" fill="none" stroke="#7c7c7c" stroke-width="0.75"/>
<rect x="1009.4" y="161.6" width="1.3" height="1.3" fill="#7c7c7c"/>
<rect x="1008.4" y="184.5" width="8.2" height="9" fill="none" stroke="#7c7c7c" stroke-width="0.85"/>
<path d="M1008.4 186.4 L1016.6 186.4" stroke="#7c7c7c" stroke-width="1.1" fill="none"/>
<path d="M1008.4 191.8 L1016.6 191.8" stroke="#7c7c7c" stroke-width="1.1" fill="none"/>
<rect x="1008.5" y="208.9" width="5.4" height="5.4" fill="none" stroke="#7c7c7c" stroke-width="0.85"/>
<circle cx="1013.6" cy="214.2" r="3.2" fill="#404040" stroke="#7c7c7c" stroke-width="0.85"/>
<rect x="1008.4" y="239.2" width="2.3" height="2.6" fill="none" stroke="#7c7c7c" stroke-width="0.75"/>
<rect x="1011.2" y="236.6" width="2.3" height="5.2" fill="none" stroke="#7c7c7c" stroke-width="0.75"/>
<rect x="1014.2" y="233.6" width="2.5" height="8.2" fill="none" stroke="#7c7c7c" stroke-width="0.75"/>
<text x="1008.4" y="263" font-size="7" fill="#7c7c7c" font-weight="normal" font-style="normal" font-family="Liberation Sans" text-anchor="start" >Ta</text>
<path d="M1008.8 266.6 Q1012.5 263.4 1016.2 266.6" fill="none" stroke="#7c7c7c" stroke-width="0.8"/>
<path d="M1008.4 281 V289.8 M1006.8 287.6 Q1009.5 290.5 1011 289" fill="none" stroke="#7c7c7c" stroke-width="0.8"/>
<path d="M1011 290.4 L1012 287 L1015.8 283 L1017.2 284.2 L1013.4 288.4 Z" fill="#7c7c7c"/>
<path d="M1010 284.6 L1012.6 287.4" stroke="#7c7c7c" stroke-width="0.7" fill="none"/>
<path d="M620.5 536 L620.5 551" stroke="#4b4b4b" stroke-width="0.9" fill="none"/>
<path d="M789.70 542.35 L791.60 544.05 L793.50 542.35" fill="none" stroke="#c4c4c4" stroke-width="0.9"/>
<circle cx="805.1" cy="543.2" r="4.6" fill="none" stroke="#d6d6d6" stroke-width="0.85"/>
<ellipse cx="805.1" cy="543.2" rx="2" ry="4.6" fill="none" stroke="#d6d6d6" stroke-width="0.7"/>
<path d="M800.5 543.2 L809.7 543.2" stroke="#d6d6d6" stroke-width="0.7" fill="none"/>
<path d="M801.3 540.8 L808.9 540.8" stroke="#d6d6d6" stroke-width="0.6" fill="none"/>
<path d="M801.3 545.6 L808.9 545.6" stroke="#d6d6d6" stroke-width="0.6" fill="none"/>
<rect x="818.7" y="537.5" width="12" height="12" fill="#6a6a6a"/>
<text x="820.3" y="546" font-size="7" fill="#e0e0e0" font-weight="normal" font-style="normal" font-family="Liberation Sans" text-anchor="start" >F</text>
<path d="M901.6 543.5 L907.4 543.5" stroke="#d6d6d6" stroke-width="0.8" fill="none"/>
<path d="M903 542.3 L901.6 543.5 L903 544.7 M906 542.3 L907.4 543.5 L906 544.7" fill="none" stroke="#d6d6d6" stroke-width="0.7"/>
<path d="M908.7 540.3 L908.7 546.7" stroke="#d6d6d6" stroke-width="0.85" fill="none"/>
<path d="M920.8 543.4 L926.8 543.4" stroke="#d6d6d6" stroke-width="0.85" fill="none"/>
<path d="M989.2 543.4 L995.4 543.4" stroke="#d6d6d6" stroke-width="0.85" fill="none"/>
<path d="M992.3 540.3 L992.3 546.5" stroke="#d6d6d6" stroke-width="0.85" fill="none"/>
<rect x="0" y="551" width="1024" height="25" fill="#191a1f"/>
<rect x="10" y="558.7" width="5.2" height="4.8" fill="#fff"/>
<rect x="15.9" y="558.7" width="5.2" height="4.8" fill="#fff"/>
<rect x="10" y="564.2" width="5.2" height="4.8" fill="#fff"/>
<rect x="15.9" y="564.2" width="5.2" height="4.8" fill="#fff"/>
<rect x="31" y="551.5" width="219" height="24.5" fill="#2d2d2d" stroke="#4a4a4a" stroke-width="0.8"/>
<circle cx="45" cy="562.6" r="3.1" fill="none" stroke="#e6e6e6" stroke-width="0.9"/>
<path d="M42.9 565 L39 568.8" stroke="#e6e6e6" stroke-width="0.95" fill="none"/>
<text x="56.5" y="567.6" font-size="9.4" fill="#d4d4d4" font-weight="normal" font-style="normal" font-family="Liberation Sans" text-anchor="start" textLength="105" lengthAdjust="spacingAndGlyphs">Escribe aquí para buscar.</text>
<circle cx="266.4" cy="563.7" r="4.5" fill="none" stroke="#fff" stroke-width="1.25"/>
<path d="M292.5 558.6 L292.5 568.2" stroke="#fff" stroke-width="0.95" fill="none"/>
<path d="M298.3 558.6 L298.3 568.2" stroke="#fff" stroke-width="0.95" fill="none"/>
<path d="M292.5 561.7 L298.3 561.7" stroke="#fff" stroke-width="1.0" fill="none"/>
<path d="M292.5 566.1 L298.3 566.1" stroke="#fff" stroke-width="1.0" fill="none"/>
<path d="M301.6 558.8 L301.6 568.2" stroke="#e0e0e0" stroke-width="0.85" fill="none"/>
<rect x="300.9" y="561.6" width="1.4" height="1.4" fill="#fff"/>
<rect x="317.3" y="574.6" width="25.0" height="1.4" fill="#72a8dc"/>
<rect x="348.5" y="574.6" width="25.0" height="1.4" fill="#72a8dc"/>
<rect x="411" y="574.6" width="25.5" height="1.4" fill="#72a8dc"/>
<rect x="442.3" y="574.6" width="25.69999999999999" height="1.4" fill="#72a8dc"/>
<defs><linearGradient id="eg" x1="0" y1="0" x2="1" y2="0.6"><stop offset="0" stop-color="#2bb4d8"/><stop offset="0.55" stop-color="#3ccf8a"/><stop offset="1" stop-color="#5bd85a"/></linearGradient><linearGradient id="eb" x1="0" y1="0" x2="0.4" y2="1"><stop offset="0" stop-color="#2a9ae4"/><stop offset="1" stop-color="#0c5aa6"/></linearGradient></defs>
<circle cx="330" cy="563.5" r="7.5" fill="url(#eb)"/>
<path d="M323 561 Q325 556 330.4 556 Q337.2 556.4 337.5 563 Q337.4 566.6 334 567.2 Q331.4 567.2 331.6 565.4 Q332.4 563.6 331.6 562.4 Q330 560.4 327.4 561.4 Q325 562.6 324.6 566 Q323.4 563 323 561 Z" fill="url(#eg)"/>
<path d="M327.4 563.2 Q329.4 561.6 331.2 562.8 Q332.2 564 331.4 565.6 Q331.4 567.4 334.4 567.2 Q336.4 566.8 337 565.4 Q336.4 569 333 570.4 Q328.4 570.4 327 566.6 Q326.6 564.4 327.4 563.2 Z" fill="#0b4a8c"/>
<ellipse cx="329.6" cy="564.2" rx="1.7" ry="1.5" fill="#15181f"/>
<path d="M354 558 H358.2 L359.4 559.4 H368 V561 H354 Z" fill="#e8a928"/>
<rect x="354" y="560.4" width="14" height="9.4" fill="#f8d251"/>
<rect x="354" y="566.2" width="14" height="3.6" fill="#e0a920"/>
<rect x="357.4" y="565" width="7.2" height="4.8" fill="#3c8ee6"/>
<rect x="359" y="567.2" width="4" height="2.6" fill="#f8d251"/>
<rect x="379.8" y="551" width="16.4" height="25" fill="#3b7a37"/>
<rect x="396.2" y="551" width="9.2" height="25" fill="#38393d"/>
<rect x="379.8" y="574.6" width="25.6" height="1.4" fill="#58c04c"/>
<path d="M385.2 559 L387.2 557.6 L393.6 562.6 L397.6 556.2 L400.4 557.4 V568.4 L397.6 569.6 L393.6 564.8 L387.2 569.6 L385.2 568.4 L389.4 563.7 Z" fill="#a574d6"/>
<path d="M397.6 556.2 L400.4 557.4 V568.4 L397.6 569.6 Z" fill="#c79cf0"/>
<circle cx="396.5" cy="567.7" r="3.4" fill="#25bfae"/>
<path d="M396.5 565.8 V569.2 M395.2 568.2 L396.5 569.5 L397.8 568.2" stroke="#fff" stroke-width="0.7" fill="none"/>
<circle cx="423.8" cy="563.5" r="3.7" fill="none" stroke="#fff" stroke-width="2.6"/>
<g stroke="#fff" stroke-width="2.3"><line x1="423.8" y1="557.4" x2="423.8" y2="559.6" transform="rotate(0 423.8 563.5)"/><line x1="423.8" y1="557.4" x2="423.8" y2="559.6" transform="rotate(45 423.8 563.5)"/><line x1="423.8" y1="557.4" x2="423.8" y2="559.6" transform="rotate(90 423.8 563.5)"/><line x1="423.8" y1="557.4" x2="423.8" y2="559.6" transform="rotate(135 423.8 563.5)"/><line x1="423.8" y1="557.4" x2="423.8" y2="559.6" transform="rotate(180 423.8 563.5)"/><line x1="423.8" y1="557.4" x2="423.8" y2="559.6" transform="rotate(225 423.8 563.5)"/><line x1="423.8" y1="557.4" x2="423.8" y2="559.6" transform="rotate(270 423.8 563.5)"/><line x1="423.8" y1="557.4" x2="423.8" y2="559.6" transform="rotate(315 423.8 563.5)"/></g>
<path d="M455.3 565 L462.6 567.8 L455.3 570.8 L448 567.8 Z" fill="#f0521f"/>
<path d="M455.3 560.8 L462.6 563.6 L455.3 566.6 L448 563.6 Z" fill="#7cc33f"/>
<path d="M455.3 556.3 L462.6 559.1 L455.3 562.1 L448 559.1 Z" fill="#2c9be8"/>
<rect x="471.3" y="551" width="30.9" height="25" fill="#b5651d"/>
<rect x="471.3" y="574.8" width="30.9" height="1.2" fill="#e08a3a"/>
<rect x="479.8" y="558.6" width="12.6" height="11.4" fill="#a8d4f0" rx="0.8"/>
<rect x="480.6" y="559.4" width="9.4" height="9.8" fill="#d8ecf8"/>
<circle cx="484.9" cy="564.4" r="4.3" fill="#f57a1a"/>
<path d="M483.4 561.8 L487.8 564.4 L483.4 567 Z" fill="#fff"/>
<path d="M857.8 565.6 L861.4 562 L865 565.6" fill="none" stroke="#fff" stroke-width="0.95"/>
<rect x="874" y="560.6" width="5.6" height="6" fill="none" stroke="#fff" stroke-width="0.85" rx="1.2"/>
<path d="M879.6 562.2 L881.4 561.4 V565.8 L879.6 565" fill="none" stroke="#fff" stroke-width="0.75"/>
<path d="M874.6 559.2 Q877 557.6 879.2 559.2 M874.6 568.2 Q877 569.8 879.2 568.2" fill="none" stroke="#fff" stroke-width="0.75"/>
<path d="M889.4 567 Q887 567 887 564.8 Q887 562.8 889.2 562.6 Q889.8 560 892.4 560 Q894.6 560 895.4 562 Q897.6 562 897.6 564.4 Q897.6 567 895.2 567 Z" fill="#f4f4f4"/>
<rect x="903.4" y="561.4" width="9" height="5.1" fill="none" stroke="#fff" stroke-width="0.8"/>
<rect x="904.6" y="562.6" width="6.6" height="2.7" fill="#d8d8d8"/>
<rect x="912.6" y="562.9" width="0.9" height="2.2" fill="#fff"/>
<path d="M902 560.4 H905.2 V561.6 H904.2 V563.2 H903 V561.6 H902 Z" fill="#fff"/>
<path d="M925.1999999999999 567.8 A2.2 2.2 0 0 1 927.4 565.5999999999999" fill="none" stroke="#fff" stroke-width="0.9" opacity="1"/>
<path d="M923.0 567.8 A4.4 4.4 0 0 1 927.4 563.4" fill="none" stroke="#fff" stroke-width="0.9" opacity="1"/>
<path d="M920.8 567.8 A6.6 6.6 0 0 1 927.4 561.1999999999999" fill="none" stroke="#fff" stroke-width="0.9" opacity="0.75"/>
<path d="M918.8 567.8 A8.6 8.6 0 0 1 927.4 559.1999999999999" fill="none" stroke="#fff" stroke-width="0.9" opacity="0.5"/>
<rect x="926.4" y="566.8" width="1.3" height="1.3" fill="#fff"/>
<path d="M933 562.4 H934.8 L937.2 560.2 V567.4 L934.8 565.2 H933 Z" fill="none" stroke="#fff" stroke-width="0.8" stroke-linejoin="round"/>
<path d="M938.6 562.2 Q939.8 563.8 938.6 565.4 M940.2 560.8 Q942 563.8 940.2 566.8 M941.8 559.6 Q944.2 563.8 941.8 568" fill="none" stroke="#fff" stroke-width="0.75"/>
<text x="949.9" y="561.5" font-size="7.6" fill="#f0f0f0" font-weight="normal" font-style="normal" font-family="Liberation Sans" text-anchor="start" textLength="36.4" lengthAdjust="spacingAndGlyphs">04:21 p. m.</text>
<text x="949.9" y="572" font-size="7.6" fill="#f0f0f0" font-weight="normal" font-style="normal" font-family="Liberation Sans" text-anchor="start" textLength="36.4" lengthAdjust="spacingAndGlyphs">26/12/2021</text>
<path d="M998.2 558.7 H1008.8 V566.7 H1003.6 L1001.6 568.8 V566.7 H998.2 Z" fill="#f2f2f2"/>
<path d="M1000 561 L1007 561" stroke="#8a8a8a" stroke-width="0.7" fill="none"/>
<path d="M1000 562.7 L1007 562.7" stroke="#8a8a8a" stroke-width="0.7" fill="none"/>
<path d="M1000 564.5 L1004.4 564.5" stroke="#8a8a8a" stroke-width="0.7" fill="none"/>
<circle cx="1008.4" cy="568.5" r="4.6" fill="#1b1c21" stroke="#8c8c8c" stroke-width="0.8"/>
<text x="1008.4" y="571" font-size="6.8" fill="#fff" font-weight="bold" font-style="normal" font-family="Liberation Sans" text-anchor="middle" >3</text>
<path d="M1021.5 551 L1021.5 576" stroke="#505050" stroke-width="0.9" fill="none"/>
<rect x="823" y="499.6" width="77" height="51.2" fill="#2b2b2b" stroke="#3d3d3d" stroke-width="0.8"/>
<rect x="875" y="525.9" width="24.4" height="24.7" fill="#4d4d4d"/>
<rect x="830.8" y="507.4" width="10.2" height="10.4" fill="#3b9ae6" rx="1.6"/>
<path d="M830.8 514.6 Q834 517 841 515.4 V516.4 Q841 517.8 839.4 517.8 H832.4 Q830.8 517.8 830.8 516.2 Z" fill="#e8c040"/>
<path d="M833 509.4 L834.6 513.8 L836.2 510 L837.8 513.8 L839.2 509.4 M838.8 509 V514.4" fill="none" stroke="#bfe0ff" stroke-width="0.7"/>
<path d="M861.2 507.2 L865.4 508.6 V512.4 Q865.4 516 861.2 517.6 Q857 516 857 512.4 V508.6 Z" fill="#fff"/>
<path d="M861.2 507.2 L865.4 508.6 V512 H861.2 Z" fill="#1a1a1a"/>
<path d="M857 512 H861.2 V517.6 Q857 516 857 512.4 Z" fill="#1a1a1a"/>
<circle cx="864" cy="515.2" r="2.6" fill="#17a34a"/>
<path d="M862.8 515.2 L863.7 516.1 L865.3 514.3" fill="none" stroke="#fff" stroke-width="0.6"/>
<rect x="884" y="510" width="5" height="7.4" fill="none" stroke="#f0f0f0" stroke-width="0.9" rx="0.8"/>
<rect x="885" y="507.4" width="3" height="2.6" fill="none" stroke="#f0f0f0" stroke-width="0.8"/>
<path d="M888.6 516.6 L889.8 517.6 L891.8 514.8" fill="none" stroke="#f0f0f0" stroke-width="0.8"/>
<ellipse cx="835.9" cy="538.2" rx="3.7" ry="5.3" fill="#0a84ee"/>
<path d="M834.2 536.2 L837.4 539.8 L835.9 541.4 V535 L837.4 536.6 L834.2 540.2" fill="none" stroke="#fff" stroke-width="0.65"/>
<circle cx="861.5" cy="538.2" r="4.4" fill="#12a5f4"/><circle cx="859.2" cy="535.6" r="2.8" fill="#12a5f4"/><circle cx="863.8" cy="540.8" r="2.8" fill="#12a5f4"/>
<text x="861.5" y="541" font-size="7.4" fill="#fff" font-weight="bold" font-style="normal" font-family="Liberation Sans" text-anchor="middle" >S</text>
<path d="M882.6 542.4 Q885 536.6 892.4 533.4 Q890.8 538.8 884.6 541.2 Z" fill="#a55bd0"/>
<path d="M882.2 542.8 L889.6 536" stroke="#c89ae6" stroke-width="0.5" fill="none"/>
</svg>
<!--ICONS2_END-->
</body>
</html>
